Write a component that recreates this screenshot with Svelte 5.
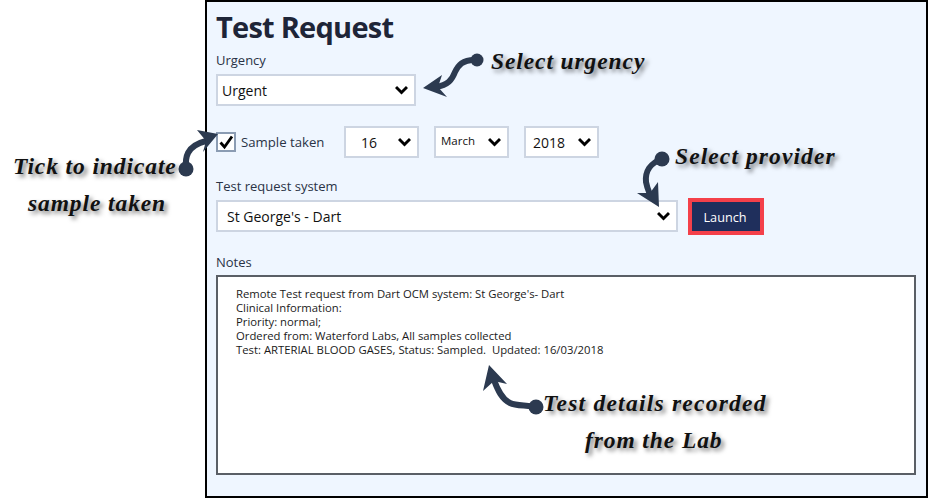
<script lang="ts">
	const callouts = [
		{ text: 'Select urgency', cls: 'c-urgency' },
		{ text: 'Select provider', cls: 'c-provider' },
		{ text: 'Tick to indicate', cls: 'c-tick' },
		{ text: 'sample taken', cls: 'c-sample' },
		{ text: 'Test details recorded', cls: 'c-details' },
		{ text: 'from the Lab', cls: 'c-lab' }
	];

	const notes = [
		"Remote Test request from Dart OCM system: St George's- Dart",
		'Clinical Information:',
		'Priority: normal;',
		'Ordered from: Waterford Labs, All samples collected',
		'Test: ARTERIAL BLOOD GASES, Status: Sampled.  Updated: 16/03/2018'
	];
</script>

{#snippet chevron()}
	<svg class="chevron" viewBox="0 0 13 10" width="13" height="10">
		<path d="M1 2 L6.5 7.5 L12 2" fill="none" stroke="#000" stroke-width="2.9" />
	</svg>
{/snippet}

<div class="page">
	<main class="panel">
		<h1>Test Request</h1>

		<div class="label">Urgency</div>
		<div class="select urgency">
			<span>Urgent</span>
			{@render chevron()}
		</div>

		<div class="sample-row">
			<div class="check">
				<svg viewBox="0 0 16 16" width="16" height="16">
					<path d="M2.5 8.5 L6.5 13 L14 2.5" fill="none" stroke="#000" stroke-width="2.8" />
				</svg>
			</div>
			<span class="check-label">Sample taken</span>
			<div class="select date day"><span>16</span>{@render chevron()}</div>
			<div class="select date month"><span>March</span>{@render chevron()}</div>
			<div class="select date"><span>2018</span>{@render chevron()}</div>
		</div>

		<div class="label system-label">Test request system</div>
		<div class="system-row">
			<div class="select system">
				<span>St George's - Dart</span>
				{@render chevron()}
			</div>
			<button class="launch">Launch</button>
		</div>

		<div class="label notes-label">Notes</div>
		<div class="notes">
			{#each notes as line}
				<div>{line}</div>
			{/each}
		</div>
	</main>

	<svg class="arrows" viewBox="0 0 932 498" width="932" height="498">
		<g fill="none" stroke="#2c3a50" stroke-width="6">
			<path d="M477 60 C462 59 458 66 455 72 C452 80 448 85 436 87" />
			<path d="M186 169 C185 158 186 146 206 141" />
			<path d="M662 159 C650 163 645 172 646 182 C647 188 649 192 651 197" />
			<path d="M536 407 C525 405 516 406 510 403 C502 399 498 391 494 380" />
		</g>
		<g fill="#2c3a50">
			<circle cx="477" cy="60" r="6.5" />
			<polygon points="423,88 442,75 438,87 447,97" />
			<circle cx="186" cy="169" r="7.5" />
			<polygon points="218,134 197,130 206,141 203,152" />
			<circle cx="662" cy="159" r="7.5" />
			<polygon points="659,207 637,193 650,193 658,182" />
			<circle cx="536" cy="407" r="7.5" />
			<polygon points="489,365 483,391 494,381 507,384" />
		</g>
	</svg>

	{#each callouts as c}
		<div class="callout {c.cls}">{c.text}</div>
	{/each}
</div>

<style>
	:global(body) {
		margin: 0;
		background: #fff;
	}

	.page {
		position: relative;
		width: 932px;
		height: 498px;
		overflow: hidden;
		font-family: 'Open Sans', 'Noto Sans', sans-serif;
	}

	.panel {
		box-sizing: border-box;
		margin-left: 205px;
		width: 723px;
		height: 498px;
		padding: 8px 9px 0;
		border: 2px solid #000;
		background: #eff6ff;
		color: #1f2a44;
	}

	h1 {
		margin: 0;
		font-size: 29px;
		line-height: 34px;
		font-weight: 700;
		letter-spacing: -0.75px;
		color: #1e2538;
	}

	.label {
		margin-top: 7px;
		font-size: 13px;
		line-height: 18px;
		color: #2a3346;
	}

	.select {
		box-sizing: border-box;
		display: flex;
		align-items: center;
		justify-content: space-between;
		height: 32px;
		padding: 0 6px 0 4px;
		border: 2px solid #cdd5e2;
		background: #fff;
		font-size: 14px;
		color: #111;
	}

	.chevron {
		flex: none;
	}

	.urgency {
		margin-top: 5px;
		width: 200px;
	}

	.sample-row {
		display: flex;
		align-items: center;
		margin-top: 20px;
	}

	.check {
		box-sizing: border-box;
		display: flex;
		align-items: center;
		justify-content: center;
		width: 20px;
		height: 20px;
		border: 2px solid #8b9cb3;
		background: #fff;
	}

	.check-label {
		margin-left: 5px;
		width: 103px;
		font-size: 13.2px;
		color: #2a3346;
	}

	.date {
		width: 75px;
		margin-right: 15px;
		padding-left: 7px;
	}

	.day {
		padding-left: 15px;
	}

	.month {
		padding-left: 5px;
		font-size: 11.5px;
	}

	.month span {
		position: relative;
		top: -2px;
	}

	.system-label {
		margin-top: 19px;
	}

	.system-row {
		display: flex;
		align-items: flex-start;
		margin-top: 3px;
	}

	.system {
		margin-top: 2px;
		width: 462px;
		padding-left: 9px;
	}

	.launch {
		box-sizing: border-box;
		margin-left: 10px;
		width: 76px;
		height: 37px;
		padding: 0 2px 0 0;
		border: 4px solid #f4404a;
		background: #1f2f5c;
		color: #fff;
		font-family: inherit;
		font-size: 12.7px;
	}

	.notes-label {
		margin-top: 18px;
	}

	.notes {
		box-sizing: border-box;
		margin-top: 4px;
		width: 700px;
		height: 200px;
		padding: 10px 18px;
		border: 2px solid #5a5f66;
		background: #fff;
		font-size: 11.3px;
		line-height: 14px;
		white-space: pre;
		color: #1a1a1a;
	}

	.arrows {
		position: absolute;
		top: 0;
		left: 0;
		pointer-events: none;
	}

	.callout {
		position: absolute;
		white-space: nowrap;
		font-family: 'Liberation Serif', serif;
		font-style: italic;
		font-weight: 700;
		font-size: 23.5px;
		line-height: 28px;
		letter-spacing: 0.9px;
		color: #111;
		text-shadow: 3px 3px 4px rgba(0, 0, 0, 0.5);
	}

	.c-urgency { left: 491px; top: 47px; }
	.c-provider { left: 675px; top: 142px; letter-spacing: 1.1px; }
	.c-tick { left: 13px; top: 152px; }
	.c-sample { left: 28px; top: 189px; }
	.c-details { left: 543px; top: 389px; letter-spacing: 1.25px; }
	.c-lab { left: 585px; top: 426px; }
</style>
